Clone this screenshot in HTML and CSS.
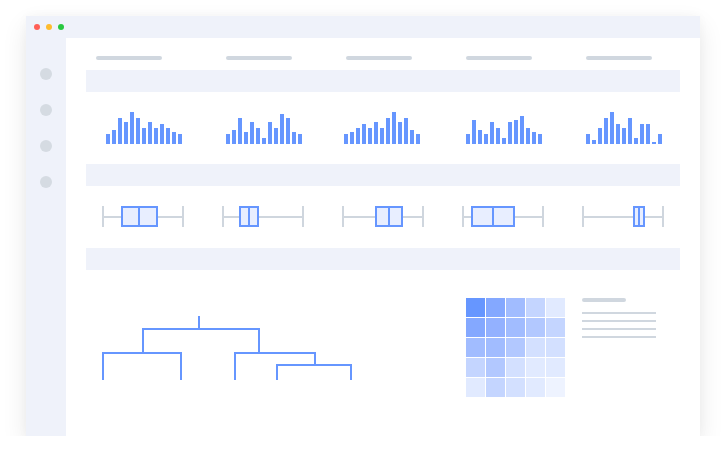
FILE: index.html
```html
<!DOCTYPE html>
<html>
<head>
  <link rel="stylesheet" href="styles.css">
</head>
<body>
  <div class="window">
    <div class="titlebar">
      <span class="dot dot-red"></span>
      <span class="dot dot-yellow"></span>
      <span class="dot dot-green"></span>
    </div>
    <div class="frame">
      <aside class="sidebar">
        <span class="nav-dot"></span>
        <span class="nav-dot"></span>
        <span class="nav-dot"></span>
        <span class="nav-dot"></span>
      </aside>
      <main class="main">
        <div class="cols caps">
          <span class="cap cap-first"></span>
          <span class="cap"></span>
          <span class="cap"></span>
          <span class="cap"></span>
          <span class="cap"></span>
        </div>

        <div class="band band-first"></div>

        <!-- histograms -->
        <div class="cols charts">
          <div class="hist">
            <span style="height:10px"></span><span style="height:14px"></span><span style="height:26px"></span><span style="height:22px"></span><span style="height:32px"></span><span style="height:26px"></span><span style="height:16px"></span><span style="height:22px"></span><span style="height:16px"></span><span style="height:20px"></span><span style="height:16px"></span><span style="height:12px"></span><span style="height:10px"></span>
          </div>
          <div class="hist">
            <span style="height:10px"></span><span style="height:14px"></span><span style="height:26px"></span><span style="height:12px"></span><span style="height:22px"></span><span style="height:16px"></span><span style="height:6px"></span><span style="height:22px"></span><span style="height:16px"></span><span style="height:30px"></span><span style="height:26px"></span><span style="height:12px"></span><span style="height:10px"></span>
          </div>
          <div class="hist hist-left">
            <span style="height:10px"></span><span style="height:12px"></span><span style="height:16px"></span><span style="height:20px"></span><span style="height:16px"></span><span style="height:22px"></span><span style="height:16px"></span><span style="height:26px"></span><span style="height:32px"></span><span style="height:22px"></span><span style="height:26px"></span><span style="height:14px"></span><span style="height:10px"></span>
          </div>
          <div class="hist">
            <span style="height:10px"></span><span style="height:24px"></span><span style="height:14px"></span><span style="height:10px"></span><span style="height:22px"></span><span style="height:16px"></span><span style="height:6px"></span><span style="height:22px"></span><span style="height:24px"></span><span style="height:28px"></span><span style="height:16px"></span><span style="height:12px"></span><span style="height:10px"></span>
          </div>
          <div class="hist">
            <span style="height:10px"></span><span style="height:4px"></span><span style="height:16px"></span><span style="height:26px"></span><span style="height:32px"></span><span style="height:20px"></span><span style="height:16px"></span><span style="height:26px"></span><span style="height:6px"></span><span style="height:20px"></span><span style="height:20px"></span><span style="height:2px"></span><span style="height:10px"></span>
          </div>
        </div>

        <div class="band"></div>

        <!-- box plots -->
        <div class="cols charts">
          <svg class="box" viewBox="0 0 82 22">
            <path class="whisker" d="M1 0V21M81 0V21M1 11H81"/>
            <rect class="iqr" x="20" y="1" width="35" height="19"/>
            <path class="median" d="M37 1V20"/>
          </svg>
          <svg class="box" viewBox="0 0 82 22">
            <path class="whisker" d="M1 0V21M81 0V21M1 11H81"/>
            <rect class="iqr" x="18" y="1" width="18" height="19"/>
            <path class="median" d="M27 1V20"/>
          </svg>
          <svg class="box" viewBox="0 0 82 22">
            <path class="whisker" d="M1 0V21M81 0V21M1 11H81"/>
            <rect class="iqr" x="34" y="1" width="26" height="19"/>
            <path class="median" d="M47 1V20"/>
          </svg>
          <svg class="box" viewBox="0 0 82 22">
            <path class="whisker" d="M1 0V21M81 0V21M1 11H81"/>
            <rect class="iqr" x="10" y="1" width="42" height="19"/>
            <path class="median" d="M31 1V20"/>
          </svg>
          <svg class="box" viewBox="0 0 82 22">
            <path class="whisker" d="M1 0V21M81 0V21M1 11H81"/>
            <rect class="iqr" x="52" y="1" width="10" height="19"/>
            <path class="median" d="M57 1V20"/>
          </svg>
        </div>

        <div class="band"></div>

        <div class="lower">
          <svg class="dendro" viewBox="0 0 252 66">
            <path d="M2 65V38H80V65M42 38V14H158V38M98 14V1M134 65V38H214V50M176 65V50H250V65"/>
          </svg>

          <div class="heatmap">
            <span class="c10"></span><span class="c8"></span><span class="c6"></span><span class="c4"></span><span class="c2"></span>
            <span class="c8"></span><span class="c7"></span><span class="c6"></span><span class="c5"></span><span class="c4"></span>
            <span class="c6"></span><span class="c6"></span><span class="c5"></span><span class="c3"></span><span class="c3"></span>
            <span class="c4"></span><span class="c5"></span><span class="c3"></span><span class="c2"></span><span class="c2"></span>
            <span class="c2"></span><span class="c4"></span><span class="c3"></span><span class="c2"></span><span class="c1"></span>
          </div>

          <div class="legend">
            <span class="legend-title"></span>
            <span class="legend-item"></span>
            <span class="legend-item"></span>
            <span class="legend-item"></span>
            <span class="legend-item"></span>
          </div>
        </div>
      </main>
    </div>
  </div>
</body>
</html>
```

FILE: styles.css
```css
body {
  margin: 0;
  background: #fff;
  font-family: "Liberation Sans", Arial, sans-serif;
}

.window {
  width: 674px;
  height: 420px;
  margin: 16px 0 0 26px;
  display: flex;
  flex-direction: column;
  background: #fff;
  box-shadow: 0 10px 24px rgba(0, 0, 0, 0.09), 0 0 10px rgba(0, 0, 0, 0.03);
}

.titlebar {
  height: 22px;
  flex: none;
  display: flex;
  align-items: center;
  gap: 6px;
  padding-left: 8px;
  background: #eff2fa;
}

.dot {
  width: 6px;
  height: 6px;
  border-radius: 50%;
}

.dot-red { background: #ff5f57; }
.dot-yellow { background: #febc2e; }
.dot-green { background: #28c840; }

.frame {
  flex: 1;
  display: flex;
}

.sidebar {
  width: 40px;
  flex: none;
  display: flex;
  flex-direction: column;
  align-items: center;
  gap: 24px;
  padding-top: 30px;
  background: #eff2fa;
}

.nav-dot {
  width: 12px;
  height: 12px;
  border-radius: 50%;
  background: #d5dbe2;
}

.main {
  flex: 1;
  padding: 18px 20px 0;
}

.cols {
  display: grid;
  grid-template-columns: repeat(5, 82px);
  column-gap: 38px;
  padding: 0 16px;
}

.caps {
  height: 4px;
}

.cap {
  width: 66px;
  height: 4px;
  margin-left: 4px;
  border-radius: 2px;
  background: #d0d7df;
}

.cap-first {
  margin-left: -6px;
}

.band {
  height: 22px;
  margin-top: 20px;
  background: #eff2fa;
}

.band-first {
  margin-top: 10px;
}

.charts {
  margin-top: 20px;
}

.hist {
  height: 32px;
  display: flex;
  align-items: flex-end;
  gap: 2px;
  padding-left: 4px;
}

.hist-left {
  padding-left: 2px;
}

.hist span {
  width: 4px;
  background: #6696ff;
}

.box {
  display: block;
  width: 82px;
  height: 22px;
}

.whisker {
  fill: none;
  stroke: #cfd6de;
  stroke-width: 2;
}

.iqr {
  fill: #e8eeff;
  stroke: #6696ff;
  stroke-width: 2;
}

.median {
  stroke: #6696ff;
  stroke-width: 2;
}

.lower {
  display: flex;
  align-items: flex-start;
  margin-top: 28px;
  padding-left: 15px;
}

.dendro {
  display: block;
  width: 252px;
  height: 66px;
  margin-top: 17px;
  flex: none;
}

.dendro path {
  fill: none;
  stroke: #6696ff;
  stroke-width: 2;
}

.heatmap {
  display: grid;
  grid-template-columns: repeat(5, 19px);
  grid-auto-rows: 19px;
  gap: 1px;
  margin-left: 113px;
}

.c10 { background: #6696ff; }
.c8 { background: #84a8ff; }
.c7 { background: #93b1ff; }
.c6 { background: #a1bcff; }
.c5 { background: #b2c8ff; }
.c4 { background: #c4d5ff; }
.c3 { background: #d3e0ff; }
.c2 { background: #e1eaff; }
.c1 { background: #eef3ff; }

.legend {
  display: flex;
  flex-direction: column;
  gap: 6px;
  margin-left: 17px;
}

.legend-title {
  width: 44px;
  height: 4px;
  margin-bottom: 4px;
  border-radius: 2px;
  background: #d0d7df;
}

.legend-item {
  width: 74px;
  height: 2px;
  background: #d0d7df;
}
```
